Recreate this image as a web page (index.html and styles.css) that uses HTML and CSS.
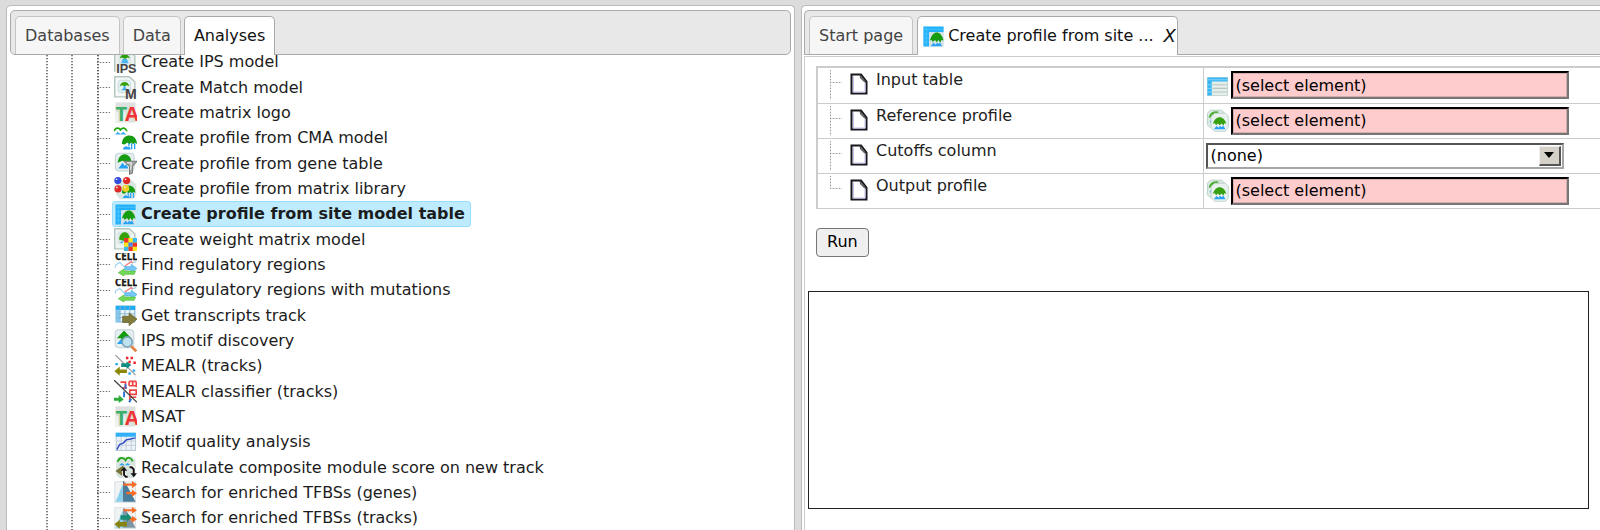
FILE: index.html
```html
<!DOCTYPE html>
<html lang="en">
<head>
<meta charset="utf-8">
<title>Create profile from site model table</title>
<link rel="stylesheet" href="styles.css">
</head>
<body>
<svg class="sprite" aria-hidden="true">
  <defs>
    <symbol id="umbrella" viewBox="0 0 10 10">
      <path d="M0 6C0 2.500 2.300 .4 5 .4S10 2.500 10 6L8.500 5 7.500 6.200 6.200 5 5 6.200 3.500 5 2 6.400Z" fill="#159c10"/>
      <path d="M4.200 5.500h.8v2h-.8zM6 5.500h.9v4H6zM8 5.500h.9v4H8zM.5 9.600C1.500 7.600 3 6.800 4 8.200L5 7.600 6 9.600Z" fill="#27a2f5"/>
    </symbol>
    <symbol id="i-ips" viewBox="0 0 16 16">
      <path d="M.5 14.500V.5h11l3 3v8" fill="#eef3f1" stroke="#b5c6c1"/>
      <rect x="3" y="1.500" width="9" height="8" rx="1" fill="#dbe8e8"/>
      <path d="M4 5c1-3.500 6-3.500 7 0L9.500 4.500 7.500 5.500 5.500 4.500Z" fill="#2c9d0b"/>
      <path d="M6 5.500h3l1 3H5z" fill="#4bb5f2"/>
      <text x="1.500" y="15.500" class="glyph" font-size="8.800" fill="#444">IPS</text>
    </symbol>
    <symbol id="i-match" viewBox="0 0 16 16">
      <path d="M.5 14.500V.5h10l4 3.500v10.500Z" fill="#f4f8f7" stroke="#b5c6c1"/>
      <rect x="3" y="3" width="8.500" height="8.500" rx="1.500" fill="#e4eff0" stroke="#c5d8dc" stroke-width=".6"/>
      <path d="M4 7.200c.8-4 6-4 6.700 0L9 6.500 7.300 7.200 5.500 6.500Z" fill="#36a20b"/>
      <path d="M6.700 6.800h1.300v1.500l1.500 1.600H5l1.700-1.600Z" fill="#3ba9ef"/>
      <text x="7.600" y="15.700" class="glyph" font-size="9.800" fill="#4a4444">M</text>
    </symbol>
    <symbol id="i-logo" viewBox="0 0 16 16">
      <path d="M1 1h14v14H1z" fill="#dde1dd"/>
      <path d="M1 8h2v7H1zM6 8h2v7H6z" fill="#f0f2ef"/>
      <text x="1" y="14" class="glyph narrow" font-size="14" fill="#3eae68">T</text>
      <text x="7.600" y="14" class="glyph narrow" font-size="14" fill="#ef3434">A</text>
    </symbol>
    <symbol id="i-cma" viewBox="0 0 16 16">
      <path d="M0 3C1 .2 3.200.2 4.500 2 6 .2 8 .2 9 3" fill="none" stroke="#1fa80e" stroke-width="1.200"/>
      <path d="M.8 5.200 2.500 3.300l2 1.500 2-1.500 2 1.900Z" fill="#3baaf5"/>
      <use href="#umbrella" x="5.500" y="5.500" width="10.500" height="10.500"/>
    </symbol>
    <symbol id="i-gene" viewBox="0 0 16 16">
      <rect x="1" y=".8" width="13" height="12.500" rx="2.500" fill="#e6eeef" stroke="#c1d3d6" stroke-width=".7"/>
      <path d="M2.500 7.500C3 3 5.500 1.500 7.500 1.500S12 3.500 12 6.500L9 7 6 6Z" fill="#159c10"/>
      <path d="M3 11.500 6 7.500l1.500 2 1-1 1.500 3Z" fill="#26a2f5"/>
      <path d="M7 6.500h9L12.800 10v4.500l-2 1V10Z" fill="#a9a9a9" stroke="#777" stroke-width=".7"/>
      <path d="M9 7.500h3l-.5 5" fill="none" stroke="#ddd"/>
    </symbol>
    <symbol id="i-lib" viewBox="0 0 16 16">
      <path d="M4 2h8l3.500 3v8L13 15.500H4L1.500 12V5Z" fill="#d9e6e2"/>
      <use href="#umbrella" x="5.500" y="5.500" width="9.500" height="9.500"/>
      <circle cx="2.700" cy="2.500" r="2.500" fill="#314bdc"/><circle cx="8.800" cy="2.500" r="2.500" fill="#df2926"/>
      <circle cx="2.800" cy="8.300" r="2.500" fill="#df2926"/><circle cx="8.200" cy="8" r="2.400" fill="#efcd27"/>
      <path d="M1.300 1.700h1M7.500 1.600h1M1.500 7.300h1M7 7h1" stroke="#fff" stroke-width=".9"/>
    </symbol>
    <symbol id="i-site" viewBox="0 0 16 16">
      <path d="M1 1h14v14H1z" fill="#cfe9f2"/>
      <path d="M1 1h14v4H5v10H1z" fill="#23b2fa"/>
      <path d="M1 3h14M3 1v14M1 6h4M1 9h4M1 12h4" stroke="#5accff" stroke-width=".4"/>
      <path d="M5 5h10v10H5z" fill="#d5e2e5"/>
      <path d="M5.500 10.800C6.500 7 8.500 5.200 10.300 5.200S14.300 7 15 11L13.700 10.200 12.700 12.300 11.500 10.500 10.300 12 9 10.500 7.500 11.800 6.700 10.500Z" fill="#159c10"/>
      <path d="M6 14.800 8 12.300l1.500 1.400 1-1.500 1 1 1-1 1.500 2.600Z" fill="#27a2f5"/>
    </symbol>
    <symbol id="i-weight" viewBox="0 0 16 16">
      <path d="M.5 14.500V.5h10l4 3.500v10.500Z" fill="#eef4f2" stroke="#b5c6c1"/>
      <rect x="2.500" y="2.500" width="9" height="9" rx="1.500" fill="#d8e5e3"/>
      <path d="M3.500 8C4 4 6 3 7.500 3S10.500 4 11 7H7v2Z" fill="#36a20b"/>
      <path d="M4 10.500 6 8.500v2Z" fill="#3ba9ef"/>
      <path d="M7 7h9v9H7z" fill="#ffe51c"/>
      <path d="M7 7h3v3H7zM13 10h3v3h-3zM10 13h3v3h-3z" fill="#ed332d"/>
      <path d="M10 10h3v3h-3z" fill="#4c83e6"/><path d="M13 7h3v3h-3zM7 13h3v3H7z" fill="#38bbef"/>
    </symbol>
    <symbol id="i-cell" viewBox="0 0 16 16">
      <path d="M1 10V8.500L4 6.500 7.500 10M12 7l3.500-1" fill="none" stroke="#9fd0ef" stroke-width=".8"/>
      <path d="M7.500 9 12 6l1 1" fill="none" stroke="#f47d7d" stroke-width=".9"/>
      <text x=".7" y="5.200" class="glyph narrow" font-size="6.800" fill="#151515" stroke="#151515" stroke-width=".2">CELL</text>
      <path d="M7.500 9.500H12V7.800l4 3-4 3v-2H7.500Z" fill="#76c7f6" stroke="#4cabe4" stroke-width=".5"/>
      <path d="M15 12.600H7v-1.500l-4 2.600L7 16v-1.200h7Z" fill="#73d959" stroke="#55bd3d" stroke-width=".5"/>
    </symbol>
    <symbol id="i-get" viewBox="0 0 16 16">
      <path d="M1.500 1.500h13v11h-13z" fill="#edf4f8" stroke="#7eaccf" stroke-width=".7"/>
      <path d="M1.200 1.200h13.600v3H1.200z" fill="#22abed"/><path d="M1.200 4h3v8.700h-3z" fill="#88c8ed"/>
      <path d="M1.500 6.800h13M1.500 9.500h13M4.300 1.500v11M7.600 1.500v11M11 1.500v11" stroke="#7eb2d5" stroke-width=".6"/>
      <path d="M6 8.500h4.500V6.200L16 10.500l-5.500 4.600v-2.300H6Z" fill="#817a3b" stroke="#64602e" stroke-width=".5"/>
    </symbol>
    <symbol id="i-discover" viewBox="0 0 16 16">
      <rect x=".8" y=".5" width="13" height="12.500" rx="2.500" fill="#e6eeef" stroke="#c1d3d6" stroke-width=".7"/>
      <path d="M2 6.500 7 1l5 5.500H9V9H5V6.500Z" fill="#149c10"/>
      <path d="M2 10.500 5 7l2 3.500Z" fill="#29a3f3"/>
      <circle cx="9.200" cy="9" r="3.500" fill="#c0e1f0" stroke="#7aa4b6" stroke-width="1.100"/>
      <path d="m12 12 3.500 3.500" stroke="#de8545" stroke-width="2"/>
    </symbol>
    <symbol id="i-mealr" viewBox="0 0 16 16">
      <path d="m1 0 14 14" stroke="#9a9a9a" stroke-width=".8"/>
      <path d="M8.300 1.200h1.700v1.700H8.300zM11.500 1.200h1.700v1.700h-1.700zM10 4h1.700v1.700H10zM13.500 4.500h1.700v1.700h-1.700z" fill="#f2212b"/>
      <path d="M1 5.500h1.700v1.700H1zM10 12h1.700v1.700H10zM13 10h1.700v1.700H13z" fill="#2aa5e9"/>
      <path d="M5 5.800h3.700V4.300L12 7l-3.300 2.800V8.300H5Z" fill="#138c83"/>
      <path d="M9 10H4V8L.3 11.300 4 14.500v-2h5Z" fill="#8a8808"/>
    </symbol>
    <symbol id="i-classify" viewBox="0 0 16 16">
      <path d="M4.500 1.500h3.500v4M6 5.500h3M10.500 1h5M10.500 4h5M10.500 1v3M13 1v3M15.500 1v4M11 7h4.500v3H11zM11 12h4.500M11 10v5" fill="none" stroke="#f04545" stroke-width="1.200"/>
      <path d="M8 3v3M7 8v4M12 13l-1.500 2.500" stroke="#2a75d5" stroke-width="1.300"/>
      <path d="m0 0 16 15.500" stroke="#444" stroke-width=".9"/>
      <path d="M0 12.300h3.300v-1.800l3.500 3-3.500 2.500v-1.500H0Z" fill="#2eac38"/>
    </symbol>
    <symbol id="i-quality" viewBox="0 0 16 16">
      <path d="M1.500 1.500h13.500v12H1.500z" fill="#eef2f5" stroke="#b6c9d6" stroke-width=".7"/>
      <path d="M1.500 7h13.500M1.500 10h13.500M5 4v9.500M8.500 4v9.500M12 4v9.500" stroke="#bdccd6" stroke-width=".6"/>
      <path d="M1.200 1.200h14v2.800h-14z" fill="#31b1fa"/>
      <path d="M2 13 4 9.200l2.500-.8 2-2.200 3-.6 3.500-.8" fill="none" stroke="#304bc4"/>
    </symbol>
    <symbol id="i-recalc" viewBox="0 0 16 16">
      <path d="M3 .5h10l2 2.500v11l-2 1.500H4L1.500 13V3Z" fill="#d8e5df"/>
      <path d="M2.500 4C4 .5 6.500.8 8 3c1.200-2.500 3.500-2.500 5 .7" fill="none" stroke="#1ca312" stroke-width="1.200"/>
      <path d="M3.500 6.500 5.500 4.800l2 1.700 2-1.700 2 1.700Z" fill="#29a3f3"/>
      <path d="m1 10.500 5.500-4v8Z" fill="#77733a"/>
      <path d="M9.500 14.500H8.200L7 13.200V9.500M10.800 7.800h1.500l1.400 1.400v3.500" fill="none" stroke="#fff" stroke-width="2.600"/>
      <path d="M9.500 14.500H8.200L7 13.200V9.500M10.800 7.800h1.500l1.400 1.400v3.500" fill="none" stroke="#161616" stroke-width="1.400"/>
      <path d="M4.800 10.200 7 7.500l2.200 2.700ZM11.500 12l2.200 2.800L16 12Z" fill="#161616"/>
    </symbol>
    <symbol id="i-genes" viewBox="0 0 16 16">
      <path d="M.5.5H15v14.500H.5z" fill="#f0f3f4" stroke="#d5dde0" stroke-width=".6"/>
      <path d="M6.300 2v12.500H.8C3 11 4.500 5 6.300 2Z" fill="#8acfee"/><path d="M6.300 1h1.400c2.500 4 5 9 7.300 13.500H6.300Z" fill="#487e9d"/>
      <path d="M6.300 0h.8v14h-.8z" fill="#667782"/>
      <path d="M6.500 1.700h6V0L16 2.500 12.500 5V3.300h-6ZM8.500 7.700h4V6L16 8.500 12.500 11V9.300h-4Z" fill="#fa6c23"/>
    </symbol>
    <symbol id="i-tracks" viewBox="0 0 16 16">
      <path d="M.5.5H15v14.500H.5z" fill="#f0f3f4" stroke="#d5dde0" stroke-width=".6"/>
      <path d="M6.300 2v12.500H.8C3 11 4.500 5 6.300 2Z" fill="#8acfee"/><path d="M6.300 1h1.400c2.500 4 5 9 7.300 13.500H6.300Z" fill="#7d95a0"/>
      <path d="M6.500 1.500h6V0L16 2.300 12.500 4.600V3h-6ZM10 7.700h2.500V6L16 8.500 12.500 11V9.300H10Z" fill="#fa6c23"/>
      <path d="M4.500 5.800H9V4.200l3.300 3.100L9 10.300V8.800H4.500Z" fill="#1a8c73"/>
      <path d="M9 10.500H4V8.800L.3 12 4 15.200v-1.700h5Z" fill="#858311"/>
    </symbol>
    <symbol id="i-table" viewBox="0 0 16 16">
      <path d="M1 2.500h14V15H1z" fill="#e5eeeb" stroke="#b5ccc5" stroke-width=".5"/>
      <path d="M4 7.500h11M4 10h11M4 12.500h11" stroke="#b9c7c2" stroke-width=".7"/>
      <path d="M1 2.500h14v2.700H4V15H1z" fill="#36b5f5"/>
      <path d="M1 4h14M1 7.500h3M1 10h3M1 12.500h3" stroke="#a2e0ff" stroke-width=".5"/>
    </symbol>
    <symbol id="i-profile" viewBox="0 0 16 16">
      <path d="M3 .8h8L13 3v8l-2 2H3L1 11V3Z" fill="#dce9e5" stroke="#b5cdc8" stroke-width=".6"/>
      <path d="M2.500 6c.5-3 3-4 6-3.500" fill="none" stroke="#4cae30" stroke-width="1.500"/>
      <path d="m2.500 9 1-1.500 1.500 3" fill="#47b5f3"/>
      <path d="M6 3h7.500L15.500 5v8l-2 2.500H6L3.500 13V5.500Z" fill="#e9f1ef" stroke="#b9cfca" stroke-width=".6"/>
      <path d="M4.800 10.500C5.500 7.500 7.500 5.800 9.500 5.800S13.500 7.500 14.200 10.500L13 9.800 12 11.500 10.700 10 9.500 11.300 8.200 10 7 11.300 6 9.800Z" fill="#36a010"/>
      <path d="M5.500 14 7.300 11.800 9 13l.8-1.500 1 1.200 1.200-1.200 1.500 2.500Z" fill="#27a2f5"/>
    </symbol>
    <symbol id="i-page" viewBox="0 0 18 22">
      <path d="M1.500 1.500H11l5.500 7v12h-15Z" fill="#fff" stroke="#17171d" stroke-width="2"/>
      <path d="M3.500 3.500V19H15V10" fill="none" stroke="#c1c3ef"/>
      <path d="M10 1.500 16.500 9.500 14.500 9 10.500 5Z" fill="#77777f" stroke="#333" stroke-width=".8"/>
    </symbol>
  </defs>
</svg>

<main class="app">
  <section class="panel">
    <nav class="tabs tabs-left" aria-label="Repository">
      <a class="tab" href="#databases">Databases</a>
      <a class="tab" href="#data">Data</a>
      <a class="tab active" href="#analyses">Analyses</a>
    </nav>
    <div class="tree-view">
      <ul class="tree">
        <li><a href="#n1"><svg class="icon"><use href="#i-ips"/></svg>Create IPS model</a></li>
        <li><a href="#n2"><svg class="icon"><use href="#i-match"/></svg>Create Match model</a></li>
        <li><a href="#n3"><svg class="icon"><use href="#i-logo"/></svg>Create matrix logo</a></li>
        <li><a href="#n4"><svg class="icon"><use href="#i-cma"/></svg>Create profile from CMA model</a></li>
        <li><a href="#n5"><svg class="icon"><use href="#i-gene"/></svg>Create profile from gene table</a></li>
        <li><a href="#n6"><svg class="icon"><use href="#i-lib"/></svg>Create profile from matrix library</a></li>
        <li><a class="selected" href="#n7"><svg class="icon"><use href="#i-site"/></svg>Create profile from site model table</a></li>
        <li><a href="#n8"><svg class="icon"><use href="#i-weight"/></svg>Create weight matrix model</a></li>
        <li><a href="#n9"><svg class="icon"><use href="#i-cell"/></svg>Find regulatory regions</a></li>
        <li><a href="#n10"><svg class="icon"><use href="#i-cell"/></svg>Find regulatory regions with mutations</a></li>
        <li><a href="#n11"><svg class="icon"><use href="#i-get"/></svg>Get transcripts track</a></li>
        <li><a href="#n12"><svg class="icon"><use href="#i-discover"/></svg>IPS motif discovery</a></li>
        <li><a href="#n13"><svg class="icon"><use href="#i-mealr"/></svg>MEALR (tracks)</a></li>
        <li><a href="#n14"><svg class="icon"><use href="#i-classify"/></svg>MEALR classifier (tracks)</a></li>
        <li><a href="#n15"><svg class="icon"><use href="#i-logo"/></svg>MSAT</a></li>
        <li><a href="#n16"><svg class="icon"><use href="#i-quality"/></svg>Motif quality analysis</a></li>
        <li><a href="#n17"><svg class="icon"><use href="#i-recalc"/></svg>Recalculate composite module score on new track</a></li>
        <li><a href="#n18"><svg class="icon"><use href="#i-genes"/></svg>Search for enriched TFBSs (genes)</a></li>
        <li><a href="#n19"><svg class="icon"><use href="#i-tracks"/></svg>Search for enriched TFBSs (tracks)</a></li>
      </ul>
    </div>
  </section>

  <section class="panel panel-right">
    <nav class="tabs tabs-right" aria-label="Documents">
      <a class="tab" href="#start">Start page</a>
      <div class="tab active doc-tab">
        <a href="#document"><svg class="icon"><use href="#i-site"/></svg>Create profile from site ...</a>
        <button class="close" type="button" aria-label="Close tab">X</button>
      </div>
    </nav>
    <form class="document">
      <table class="props">
        <tbody>
          <tr>
            <th scope="row"><div class="name"><span class="branch"></span><svg class="page"><use href="#i-page"/></svg><label for="input-table">Input table</label></div></th>
            <td><div class="value"><svg class="icon"><use href="#i-table"/></svg><input id="input-table" type="text" value="(select element)"></div></td>
          </tr>
          <tr>
            <th scope="row"><div class="name"><span class="branch"></span><svg class="page"><use href="#i-page"/></svg><label for="reference">Reference profile</label></div></th>
            <td><div class="value"><svg class="icon"><use href="#i-profile"/></svg><input id="reference" type="text" value="(select element)"></div></td>
          </tr>
          <tr>
            <th scope="row"><div class="name"><span class="branch"></span><svg class="page"><use href="#i-page"/></svg><label for="cutoffs">Cutoffs column</label></div></th>
            <td><div class="value"><span class="dropdown"><select id="cutoffs"><option>(none)</option></select><span class="arrow"></span></span></div></td>
          </tr>
          <tr>
            <th scope="row"><div class="name"><span class="branch last"></span><svg class="page"><use href="#i-page"/></svg><label for="output">Output profile</label></div></th>
            <td><div class="value"><svg class="icon"><use href="#i-profile"/></svg><input id="output" type="text" value="(select element)"></div></td>
          </tr>
        </tbody>
      </table>
      <button class="run" type="button">Run</button>
      <div class="log"></div>
    </form>
  </section>
</main>
</body>
</html>
```
FILE: styles.css
```css
* { box-sizing: border-box; }

body {
  margin: 0;
  background: #dcdcdc;
  color: #222;
  font: 16px/20px "DejaVu Sans", Verdana, sans-serif;
  overflow: hidden;
}

a { color: inherit; text-decoration: none; }

.sprite { position: absolute; width: 0; height: 0; }
.glyph { font-family: "Liberation Sans", sans-serif; font-weight: bold; }
.glyph.narrow { font-family: "Liberation Sans Narrow", "Open Sans", sans-serif; }

.icon { flex: none; width: 23px; height: 23px; }

.app {
  display: grid;
  grid-template-columns: 789fr 799fr;
  gap: 6px;
  height: 100vh;
  padding: 5px 0 0 6px;
}

.panel {
  display: flex;
  flex-direction: column;
  min-width: 0;
  min-height: 0;
  padding: 4px 3px 0;
  background: #fff;
  border: 1px solid #bbb;
  border-bottom: 0;
  border-radius: 5px 5px 0 0;
}

.panel-right {
  padding: 4px 0 0 2px;
  border-right: 0;
  border-top-right-radius: 0;
}

/* Tab strips */
.tabs {
  display: flex;
  flex: none;
  align-items: flex-end;
  height: 45px;
  padding: 0 4px;
  background: #e8e8e8;
  border: 1px solid #aaa;
  border-radius: 5px;
}

.tabs-left { gap: 3px; }

.tabs-right {
  gap: 4px;
  border-right: 0;
  border-radius: 5px 0 0 0;
}

.tab {
  display: flex;
  align-items: center;
  height: 38px;
  padding: 0 9px;
  background: #f6f6f6;
  border: 1px solid #c4c4c4;
  border-bottom: 0;
  border-radius: 5px 5px 0 0;
  color: #444;
}

.tab.active {
  height: 39px;
  margin-bottom: -1px;
  background: #fff;
  border-color: #aaa;
  color: #111;
}

.doc-tab { padding: 0 1px 0 4px; gap: 10px; }
.doc-tab a { display: flex; align-items: center; gap: 3px; }

.close {
  padding: 0;
  background: none;
  border: 0;
  color: #111;
  font: italic 18px/20px "DejaVu Sans", sans-serif;
}

/* Tree */
.tree-view { flex: 1; min-height: 0; overflow: hidden; }

.tree {
  display: grid;
  grid-auto-rows: 26px 25px 25px;
  margin: -6px 0 0;
  padding: 0 0 0 87px;
  list-style: none;
  color: #1c1c1c;
  background:
    repeating-linear-gradient(#808080 0 1px, #d5d5d5 1px 2px, #fff 2px 3px) 36px 0 / 2px 100% no-repeat,
    repeating-linear-gradient(#808080 0 1px, #d5d5d5 1px 2px, #fff 2px 3px) 61px 0 / 2px 100% no-repeat,
    repeating-linear-gradient(#606060 0 1px, #c8c8c8 1px 2px, #fff 2px 3px) 87px 0 / 2px 100% no-repeat;
}

.tree li { display: flex; align-items: center; gap: 2px; }

.tree li::before {
  content: "";
  width: 13px;
  height: 1px;
  background: repeating-linear-gradient(90deg, #707070 0 1px, #ddd 1px 3px);
}

.tree a {
  display: flex;
  align-items: center;
  gap: 4px;
  height: 100%;
  padding: 0 5px 0 1px;
  border: 1px solid transparent;
  border-radius: 3px;
  white-space: nowrap;
}

.tree .selected {
  background: #beebff;
  border-color: #99defd;
  font-weight: bold;
}

/* Document */
.document {
  flex: 1;
  min-height: 0;
  margin-top: 1px;
  padding: 9px 0 0;
  border: 1px solid #ccc;
  border-width: 1px 0 0 1px;
}

.props {
  width: calc(100% - 11px);
  margin-left: 11px;
  border-collapse: collapse;
  table-layout: fixed;
  border-top: 2px solid #ccc;
  border-left: 2px solid #ccc;
}

.props tr { height: 35px; }
.props tr:first-child { height: 36px; }
.props th, .props td {
  padding: 0;
  border-bottom: 1px solid #ccc;
  font-weight: normal;
  text-align: left;
}
.props th { width: 386px; border-right: 1px solid #ccc; }

.name {
  display: flex;
  align-items: flex-start;
  height: 34px;
  padding: 2px 0 2px 12px;
}
.name label { padding: 0 0 0 8px; }

.branch {
  width: 12px;
  height: 30px;
  background:
    repeating-linear-gradient(#999 0 1px, #ddd 1px 3px) 0 0 / 1px 100% no-repeat,
    repeating-linear-gradient(90deg, #999 0 1px, #ddd 1px 3px) 0 12px / 100% 1px no-repeat;
}
.branch.last { height: 13px; }

.page { width: 18px; height: 22px; margin: 3px 0 0 8px; }

.value { display: flex; align-items: center; gap: 2px; padding: 0 2px; }

.value input {
  width: 338px;
  height: 28px;
  padding: 0 3px;
  background: #fecccc;
  border: 2px solid;
  border-color: #000 #767676 #767676 #000;
  box-shadow: inset 0 0 0 1px #d6acac;
  color: #000;
  font: inherit;
}

.dropdown { display: grid; width: 358px; }
.dropdown > * { grid-area: 1 / 1; }

.dropdown select {
  height: 26px;
  padding: 0 3px;
  appearance: none;
  background: #fff;
  border: 2px solid;
  border-color: #555 #a5a5a5 #a5a5a5 #555;
  border-radius: 0;
  color: #000;
  font: inherit;
}

.arrow {
  display: grid;
  place-items: center;
  place-self: center end;
  width: 22px;
  height: 20px;
  margin-right: 3px;
  background: #d5d1c9;
  border: 1px solid #eee;
  border-right: 2px solid #555;
  border-bottom: 2px solid #555;
  pointer-events: none;
}
.arrow::before {
  content: "";
  border: 5px solid transparent;
  border-top: 6px solid #000;
  border-bottom: 0;
}

.run {
  display: block;
  height: 29px;
  margin: 19px 0 0 11px;
  padding: 0 10px;
  background: #efefef;
  border: 1px solid #767676;
  border-radius: 4px;
  color: #000;
  font: inherit;
}

.log {
  height: 218px;
  margin: 34px 11px 0 3px;
  border: 1px solid #222;
}
```
